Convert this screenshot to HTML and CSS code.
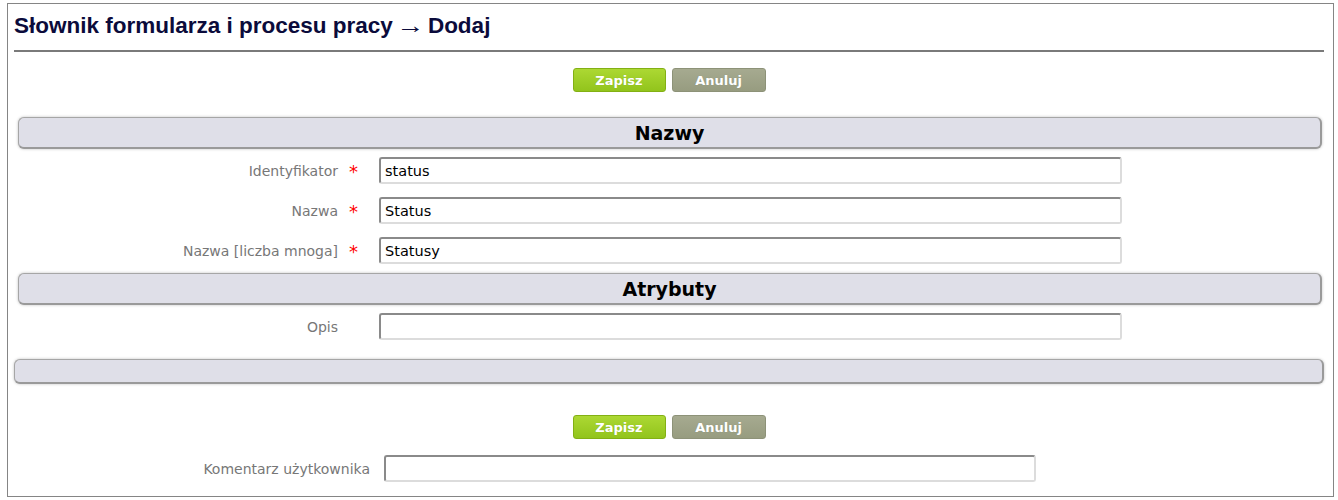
FILE: index.html
```html
<!DOCTYPE html>
<html lang="pl">
<head>
<meta charset="utf-8">
<title>Słownik formularza i procesu pracy → Dodaj</title>
<link rel="stylesheet" href="styles.css">
</head>
<body>
<div class="frame">
  <h1 class="title">Słownik formularza i procesu pracy <span class="arrow">→</span> Dodaj</h1>
  <div class="rule"></div>
  <div class="actions actions-top">
    <button class="btn btn-save">Zapisz</button>
    <button class="btn btn-cancel">Anuluj</button>
  </div>

  <div class="bar"><span>Nazwy</span></div>
  <div class="row">
    <label class="lbl">Identyfikator</label>
    <span class="req">*</span>
    <div class="field"><input class="inp" type="text" value="status"></div>
  </div>
  <div class="row">
    <label class="lbl">Nazwa</label>
    <span class="req">*</span>
    <div class="field"><input class="inp" type="text" value="Status"></div>
  </div>
  <div class="row">
    <label class="lbl">Nazwa [liczba mnoga]</label>
    <span class="req">*</span>
    <div class="field"><input class="inp" type="text" value="Statusy"></div>
  </div>

  <div class="bar"><span>Atrybuty</span></div>
  <div class="row">
    <label class="lbl">Opis</label>
    <span class="req"></span>
    <div class="field"><input class="inp" type="text" value=""></div>
  </div>

  <div class="bar bar-empty"></div>

  <div class="actions actions-bottom">
    <button class="btn btn-save">Zapisz</button>
    <button class="btn btn-cancel">Anuluj</button>
  </div>

  <div class="comment-row">
    <label class="lbl">Komentarz użytkownika</label>
    <input class="inp inp-comment" type="text" value="">
  </div>
</div>
</body>
</html>
```

FILE: styles.css
```css
* { box-sizing: border-box; }

html, body {
  margin: 0;
  padding: 0;
  background: #ffffff;
}

.frame {
  margin: 3px 0 0 7px;
  width: 1327px;
  height: 494px;
  border: 1px solid #858585;
  padding: 0 9px 0 6px;
  background: #fff;
}

.title {
  margin: 9px 0 0 0;
  height: 26px;
  line-height: 26px;
  font-family: "Liberation Sans", Arial, sans-serif;
  font-size: 22.5px;
  font-weight: bold;
  color: #0b0b3b;
  white-space: nowrap;
}

.arrow {
  display: inline-block;
  margin: 0;
  transform: scaleX(1.25);
}

.rule {
  margin-top: 11px;
  height: 2px;
  background: #7a7a7a;
}

.actions {
  display: flex;
  justify-content: center;
  gap: 6px;
}

.actions-top { margin-top: 16px; margin-bottom: 25px; }
.actions-bottom { margin-top: 31px; }

.btn {
  height: 24px;
  padding: 0;
  font-family: "DejaVu Sans", Verdana, sans-serif;
  font-size: 13px;
  font-weight: bold;
  color: #fff;
  border-radius: 3px;
  cursor: pointer;
  text-shadow: 0 0 1px rgba(0,0,0,0.15);
}

.btn-save {
  width: 93px;
  background: linear-gradient(#acd833, #92c41c);
  border: 1px solid #83b014;
}

.btn-cancel {
  width: 94px;
  background: linear-gradient(#a6aa90, #979c80);
  border: 1px solid #8d9278;
}

.bar {
  margin: 4px 2px 0 4px;
  height: 32px;
  background: #dfdfe8;
  border: 1px solid #a6a6a6;
  border-right: 2px solid #9a9a9a;
  border-bottom: 2px solid #9a9a9a;
  border-radius: 6px;
  box-shadow: 0 0 3px rgba(0,0,0,0.25);
  display: flex;
  align-items: center;
  justify-content: center;
}

.bar span {
  font-family: "DejaVu Sans", Verdana, sans-serif;
  font-size: 19px;
  font-weight: bold;
  color: #000;
}

.bar-empty {
  margin: 14px 0 0 0;
  height: 25px;
}

.row {
  display: grid;
  grid-template-columns: 324px 41px 743px;
  align-items: center;
  height: 40px;
  padding-top: 8px;
  padding-bottom: 5px;
}

.lbl {
  font-family: "DejaVu Sans", Verdana, sans-serif;
  font-size: 14px;
  color: #777777;
  text-align: right;
}

.req {
  color: #ff0000;
  font-family: "DejaVu Sans", Verdana, sans-serif;
  font-size: 18px;
  padding-left: 11px;
  line-height: 18px;
  position: relative;
  top: 1px;
}

.inp {
  display: block;
  width: 100%;
  height: 27px;
  padding: 0 4px;
  font-family: "DejaVu Sans", Verdana, sans-serif;
  font-size: 14.5px;
  color: #000;
  background: #fff;
  border: 2px solid #dcdcdc;
  border-top-color: #8a8a8a;
  border-left-color: #8a8a8a;
  border-radius: 3px;
  outline: none;
}

.comment-row {
  display: flex;
  align-items: center;
  margin-top: 16px;
}

.comment-row .lbl {
  width: 356px;
  flex: none;
}

.inp-comment {
  margin-left: 14px;
  width: 652px;
  flex: none;
}
```
